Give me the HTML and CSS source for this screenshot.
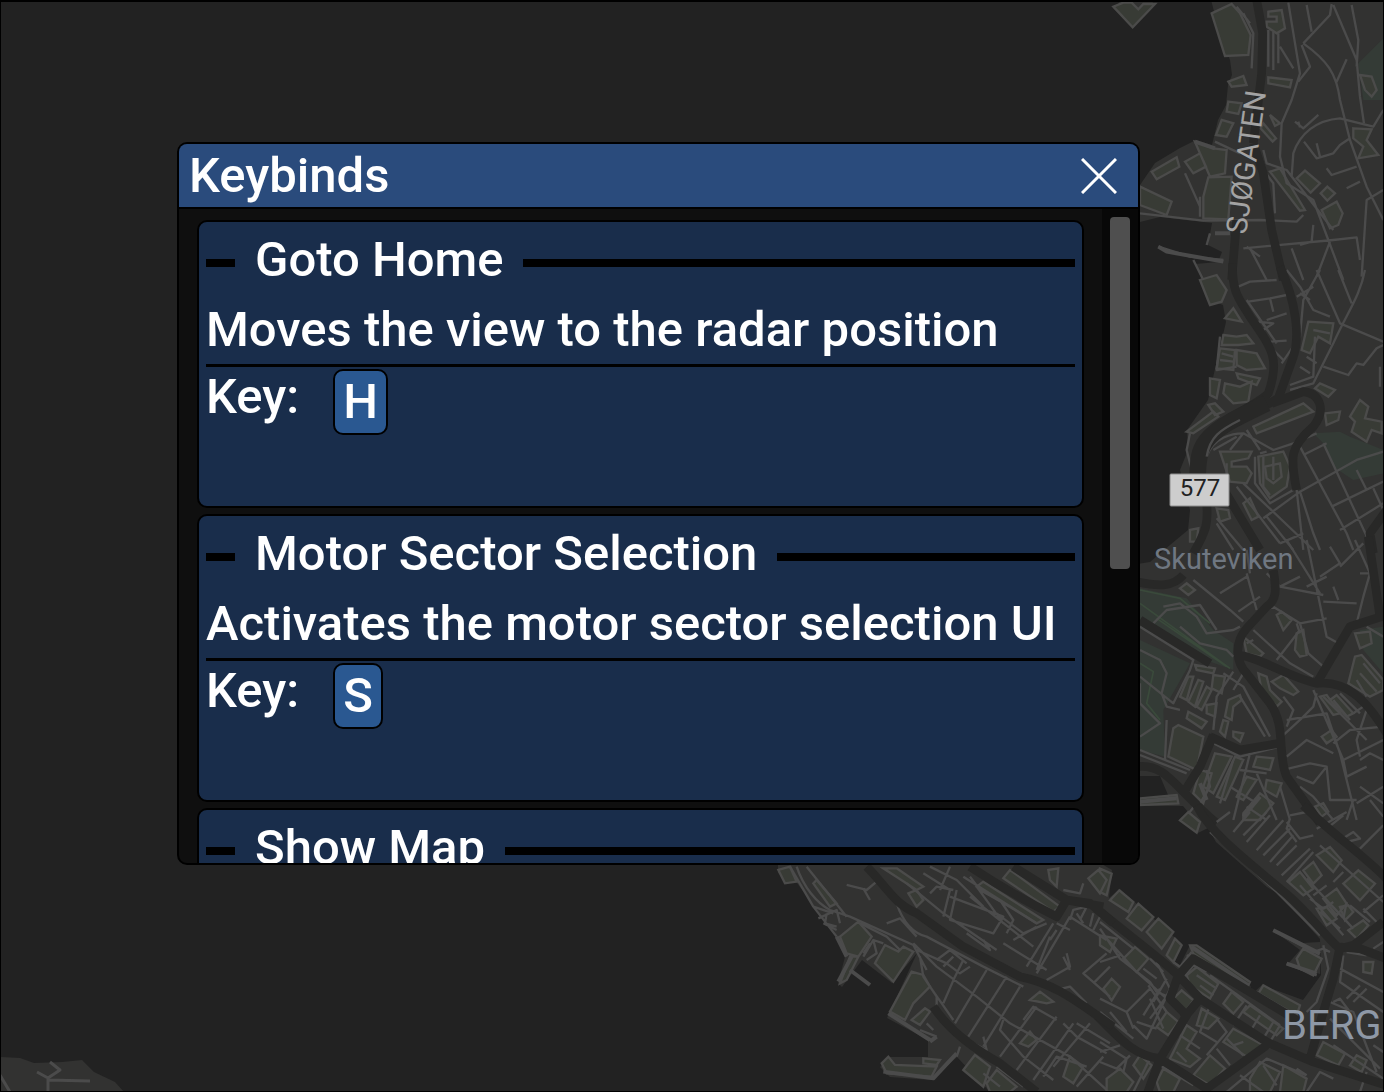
FILE: index.html
```html
<!DOCTYPE html>
<html lang="en">
<head>
<meta charset="utf-8">
<title>Keybinds</title>
<link rel="stylesheet" href="styles.css">
</head>
<body>
<main class="viewport">
<svg class="map" viewBox="0 0 1384 1092" preserveAspectRatio="xMidYMid slice" role="img" aria-label="Map">
  <!-- land -->
  <path class="land" d="M1384 0H1211L1215 15 1222 40 1230 60 1232 75 1228 85 1226 105 1218 120 1212 145 1196 140 1180 148 1155 163 1140 185 1100 195V222H1140L1160 217 1212 223 1208 245 1222 252 1218 262 1195 264 1200 275 1210 300 1223 305 1226 322 1217 360 1208 400 1187 430 1188 450 1180 470 1190 510 1188 530 1170 545 1150 562 1100 570V776H1160L1168 795 1130 806H1183L1188 812 1180 820 1198 833 1208 828 1216 842 1267 887 1280 895 1320 939 1321 975 1303 1000 1262 985 1253 993 1248 980 1190 945 1180 965 1175 962 1182 944 1120 889 1109 898 1112 870 1100 863V820H1060V867L1063 887 1080 890 1083 863H1045V820H760L778 863V873L797 883 837 937 845 957 838 983 842 987 862 960 892 983 917 953 887 1018 928 1040V1057L890 1057 880 1067 890 1077 932 1080 957 1057 990 1092H1384Z"/>
  <path class="land" d="M1113 8 1122 0H1155L1132 27ZM0 1057 20 1058 34 1063 62 1062 82 1060 94 1072 115 1082 124 1092H0ZM1274 931 1303 943 1320 942V974L1287 965 1300 950Z"/>
  <path class="street" d="M0 1075 10 1092M48 1092V1078L37 1072M48 1080 90 1081M48 1078 60 1070 50 1062"/>

  <!-- northern shore -->
  <g transform="translate(1100 0) scale(.3333)">
    <path class="park" d="M775 190 850 115V300H790ZM775 190"/>
    <path class="building" d="M40 20 98 82 165 12H130L115 28 95 8H70ZM335 40 395 12 420 40 452 105 445 165 375 168ZM385 245 430 228 440 255 395 260ZM505 232 575 240 570 262 505 250ZM385 305 425 310 415 342 380 335ZM365 360 400 370 380 410 348 405ZM155 515 230 472 238 500 170 538ZM120 560 215 605 200 645 120 615ZM255 485 300 460 318 500 280 520ZM285 425 340 445 380 450 375 520 330 530ZM325 532 395 530 385 658 310 655V590ZM590 535 615 512 660 550 632 578ZM662 580 682 560 705 580 682 602ZM665 630 710 605 728 640 715 675 690 685ZM760 385 815 388 800 420 835 465 775 475 790 440 760 415ZM505 35 545 30 555 85 530 100 500 80V65H530V50H505ZM510 345 540 370 525 378ZM490 370 528 415 518 425 482 385ZM510 515 540 505 615 630 600 632ZM780 225 815 230 830 270 815 290 795 270Z"/>
    <path class="street" d="M565 8 600 220 575 300 545 370 540 470 560 550 640 600 730 840M610 130 690 45 695 12M620 15 635 95M605 135 630 200 595 245M610 130C680 180 710 220 720 300L750 420 800 560 850 660M700 15 770 180 780 290 792 370M755 15 775 120 770 200M740 178 710 245M575 530 580 460C600 400 650 360 720 355L820 380 850 330M585 365 610 385 655 345M600 382 595 365M612 425 650 475 700 460 720 435 750 415M650 430 660 470M680 505 695 525 770 500M740 565 780 545M850 570 800 600 785 830M120 640 310 662 480 660 590 665 610 645M430 745 700 720 770 712 780 780M640 675 635 725 600 735M575 745 610 840M690 725 650 830M450 745 500 840M490 450 500 490 560 510 700 690M475 490 520 550 525 640M540 140 580 205M345 425 420 460M255 520 300 620M300 590 300 650M175 740 270 770 370 780M280 780 310 840M330 700 320 735M440 740 480 770M520 95V210M535 100V190M505 90V200M430 40 460 100 455 205M410 20 450 70"/>
    <path class="street thick" d="M175 740 200 755 370 785M285 425 345 445M345 700H390"/>
    <path class="road" d="M470 0 488 100 485 220 460 430M460 430 490 520 515 690 550 840M410 660 395 840"/>
  </g>

  <!-- Sandviken slope -->
  <g transform="translate(1100 270) scale(.3333)">
    <path class="park" d="M670 520 750 500 850 540V610L760 630 700 590ZM640 490 720 485 750 500 670 520Z"/>
    <path class="building" d="M300 30 350 15 380 60 365 95 330 105ZM375 145 400 115 425 155ZM370 195 410 200 440 195 460 220 415 225 365 225ZM360 235 405 240 400 300 350 295ZM410 240 470 250 495 295 440 300 410 285ZM330 325 360 330 350 385 330 375ZM375 340 420 350 455 335 445 395 400 400 370 370ZM410 310 480 325 470 345 415 325ZM260 485 340 425 355 440 280 490ZM325 405 345 400 370 425 345 435ZM625 155 700 160 690 220 655 200 630 250 605 240ZM645 355 660 340 705 360 685 380ZM675 430 720 425 715 450 680 465ZM780 390 805 410 795 445 845 455V490L815 480 800 515 755 485 765 455 750 440ZM360 545 455 545 445 565 395 575V590H440L455 610 440 640 390 635ZM475 560 550 545 570 590 560 650 510 685 480 640ZM495 590 540 580 545 620 520 640 500 625ZM430 700 450 685 475 740 455 750ZM460 470 610 400 640 425 600 440 470 490ZM350 715 385 720 390 745 360 755ZM270 780 295 775 290 815 270 815Z"/>
    <path class="street" d="M660 0 610 90 600 200 545 280M650 0 720 160 850 215M715 0 755 100M795 0C780 80 740 130 700 220L640 340 570 360M670 290 745 315 770 280 790 285 830 235 850 225M570 345 640 320 645 200M510 215 560 212M500 150 560 130M445 95 510 85 560 75M510 85 520 125M415 50 450 35 530 30M440 90 530 220M470 155 520 160 490 180M560 0 600 50 640 120 690 140M590 80 640 50M550 270 520 240M320 560C340 500 400 490 430 490L520 540 580 520 650 490M430 490 390 540M440 480 480 540M410 650 540 820M430 640 640 840M490 745 600 665 770 570 850 545M590 660 610 840M600 665 640 790 660 840M600 530 740 790 760 840M670 520 810 820M610 555 680 520M695 710 850 635M720 780 850 700M820 655 850 720M770 600 800 660M380 580V640M480 550 500 545M490 560V650L510 675M520 560V630M465 560V640L510 700 580 660M540 820 610 790M500 740 580 840M350 760 400 840M350 745 430 840M840 290V350M360 200 350 300 410 290M365 250 400 260M360 270 400 275M270 490 260 540 275 600M340 540 410 500M620 260 650 280M600 290 630 310M640 180 690 190M600 70 630 90"/>
    <path class="road" d="M398 -20C395 70 420 90 450 140 520 240 540 270 505 370 480 400 380 440 340 480 290 520 290 560 290 600M320 700C325 760 320 780 280 850M540 -10C590 100 600 200 580 260L535 385 420 450M515 400 610 365C660 370 680 420 640 470 570 530 570 560 590 660M360 640 480 840M860 720 810 790 820 850"/>
    <path class="road wide" d="M500 400C420 440 370 460 330 500 300 530 295 560 293 610"/>
    <path class="street" d="M320 560C330 500 360 480 420 450"/>
  </g>

  <!-- Skuteviken -->
  <g transform="translate(1100 540) scale(.3333)">
    <path class="park" d="M100 140 260 175 340 270 400 310 400 390 260 340 100 230ZM120 300 270 370 190 510 195 650 120 630ZM780 270 850 260V400L790 330Z"/>
    <path class="meadow" d="M120 150 240 175 330 250M120 190 390 385M170 235 380 380M120 370 160 395 140 490 180 540"/>
    <path class="building" d="M240 145 260 130 285 150 265 165ZM285 375 345 385 340 400 290 390ZM340 405 375 410 365 460 335 445ZM240 470 265 410 280 410 260 480ZM265 485 295 420 310 425 285 500ZM290 500 320 440 335 450 305 510ZM265 515 320 545 305 565 260 535ZM220 565 235 555 310 590 290 690 205 650ZM320 495 350 490 345 530 320 520ZM385 480 420 465 425 480 400 500 395 540 375 530ZM370 540 385 545 375 590 360 575ZM475 400 500 410 510 450 545 485 530 500 485 450ZM515 425 550 405 595 455 580 465 540 445ZM530 225 545 215 575 240 550 270ZM590 280 610 270 620 345 600 350 585 330ZM765 280 810 275 815 310 780 325ZM765 350 785 345 850 420V450L810 470 745 430ZM780 400 830 455M345 640 395 650 340 760 310 740ZM300 690 335 700 310 790 280 760ZM405 650 430 660 375 780 350 770ZM470 650 520 655 510 690 460 680ZM120 775 230 765 235 790 120 795ZM440 710 470 720 430 780 410 770ZM500 720 545 730 530 770 495 750ZM665 590 695 570 710 590 680 610ZM690 480 710 465 760 520 740 530ZM660 470 680 465 720 520 700 525ZM430 290 490 340 480 350 440 340ZM430 820 480 760 520 790 480 840H430ZM400 575 430 580 420 605 400 590ZM645 800 670 790 685 815 665 830Z"/>
    <path class="street" d="M280 120 390 210 430 245M360 160 440 110M440 100 470 210M415 215 480 170M450 100 440 30M500 100 540 140 670 165M560 0 660 160M620 0 680 290 715 310M660 110 720 70 690 20M540 140 600 110M670 185 770 190M765 0 810 100 790 170 770 250M700 140 715 180M720 80 790 10M780 100 810 100M620 140 680 110M450 240 480 220 520 200 600 250 680 235M460 270 570 370 640 410M590 250 600 280M600 250 625 340 670 380M530 360 600 270M440 310 460 300M190 200 240 190 290 230 320 280 400 270 420 260M240 260 300 310 380 330 400 350M160 250 200 210 300 195 350 270M120 260 280 360 270 390 220 490 120 410M120 330 180 360 200 400 185 460 200 500 240 510M120 430V490L180 550 120 590M120 630 270 690M120 645 260 700M200 540 195 660M400 395 350 470 340 570M370 400 430 440 510 590M420 470 495 590M430 400 400 450M560 540 680 520 720 640 770 840M545 590 600 540 640 500 650 460M640 450 730 660 850 600M670 470 800 600M560 650 620 600 700 640M550 690 630 670 680 680 640 730 590 710M680 680 690 780 770 780M730 660 740 710 800 680M800 510 770 600 780 650M850 560 750 570 700 610M850 660 810 640 780 660M760 520 790 500M550 470 580 510 560 560M780 740 850 790M850 740 770 790M600 740 640 770 700 840M340 610 420 650 540 620M400 660 360 790M450 640 400 840M420 690 500 700M470 700 530 840M390 740 470 790M250 840 290 790 350 840M320 690 330 740 300 790M440 800 500 840M540 740 570 840M760 780 740 840M810 780 850 830M700 480 750 540M720 460 780 520M770 420 800 470M790 370 840 430M800 260 850 290"/>
    <path class="street thick" d="M120 785 230 775M300 730 320 780M430 830 480 770"/>
    <path class="road" d="M520 90C530 150 530 180 500 200L440 265C400 310 410 370 440 400L510 490C560 560 530 640 560 710L660 850M410 345C480 350 560 410 650 430L750 260 860 225M650 430C740 420 800 480 860 580M110 125C180 140 220 140 250 105M330 590 420 630 540 610M340 585 300 680 250 760M110 680C200 670 220 740 350 850M805 -10 840 230M120 240 330 370"/>
  </g>

  <!-- Vågen harbour, east -->
  <g transform="translate(1100 812) scale(.3333)">
    <path class="building" d="M240 25 265 0 300 30 290 62ZM0 170 35 185 20 250 0 240ZM30 265 58 235 100 270 85 300ZM80 320 115 275 160 315 125 355ZM140 360 175 320 220 360 185 410ZM200 430 225 380 245 400 220 450ZM270 400 290 400 450 510 440 530 280 425ZM475 545 490 520 600 580 590 610ZM590 440 610 410 665 440 640 490 600 470ZM650 130 690 105 725 145 700 180ZM730 215 775 175 825 215 780 265ZM610 175 640 150 665 190 640 215ZM565 210 600 180 640 230 610 250ZM670 260 710 230 740 275 710 310ZM720 285 745 280 760 300 735 325ZM650 290 680 285 710 320 680 340ZM745 355 790 325 805 340 770 380ZM70 440 105 405 145 440 110 480ZM10 530 35 500 60 525 35 565ZM260 490 290 465 355 515 330 560 270 520 ZM370 575 395 540 430 570 400 605ZM220 560 245 535 280 565 255 600ZM170 645 200 600 235 630 205 670ZM210 740 260 640 290 660 260 710 300 740 270 765ZM290 640 305 590 355 620 325 650ZM280 790 330 730 375 770 330 820ZM370 690 400 650 490 700 450 740ZM430 600 450 580 550 650 530 670ZM650 730 670 690 735 725 715 760ZM750 760 770 730 800 745 785 780ZM20 800 60 770 100 810 80 840H20ZM100 760 120 730 155 760 130 800ZM170 810 190 770 240 800 220 840H180ZM450 800 480 750 540 780 510 840H450ZM550 760 620 800 610 840H540ZM790 450 820 450 815 485 790 480ZM0 370 50 380 30 420 0 400Z"/>
    <path class="street" d="M330 60 400 120 530 240 660 370M350 30 390 0M400 60 450 0M430 70 500 0M440 90 510 10M470 115 550 25M490 130 570 50M510 150 580 70M530 160 590 100M545 190 630 110M560 210 640 120M560 30 600 80 640 70M570 10 620 0M570 20 560 50 590 90M660 100 850 270M600 220 730 370M620 200 760 350M650 50 740 0M680 50 730 10M780 110 850 40M720 85 760 60 780 80 740 90M700 210 730 180M750 280 810 330M790 300 850 250M790 290 830 330M640 250 680 220M630 260 670 290 700 270M730 320 740 270M660 300 720 350M520 355 640 420 670 410 690 420M560 455 650 490M670 400 685 470 650 570 620 600M730 430 720 510 850 600M740 420 800 430M720 470 850 540M740 560 780 520M760 570 800 530M690 570 760 600 830 780M690 620 840 770M700 570 720 560 750 600M700 700 850 800M820 410 850 390M0 330 100 410M0 350 60 440 150 510 170 540M20 380 110 480 200 560M170 450 210 530 140 680 100 640M150 440 190 480M130 470 170 500M145 520 200 600M180 530 130 610M150 560 190 650M170 540 220 560M200 500 160 570M210 540 150 620M110 630 170 650M0 450 60 430M0 560 80 600 150 530M80 600 100 650M0 600 100 680M30 600 80 660M250 500 280 460 320 480M330 490 540 640M290 490 350 530M300 520 340 550M220 450 240 465 275 420M260 430 280 440 440 530M470 540 600 620M440 580 400 640M480 610 450 660M520 630 490 680M330 580 300 660 350 690M350 620 380 660 320 730M240 670 300 710M230 720 260 750M350 710 390 760M380 680 430 730M400 700 430 690M380 840 500 740 620 790M420 790 490 840M490 760 530 820M590 770 620 790M620 840 660 780 700 800M0 690 80 740 70 780M0 720 60 700M0 750 50 770 90 730M150 740 100 840M180 760 280 820M800 780 780 840M820 700 850 720M510 690 540 640"/>
    <path class="street thick" d="M520 355 600 395 660 425M560 455 650 485M275 405 445 520"/>
    <path class="road" d="M290 -20C330 60 420 130 540 230 620 290 680 380 720 410L760 400 850 330M610 -20C700 70 780 120 860 200M720 405 700 500 670 600 630 740M720 405 780 410 860 440M-10 290C60 350 170 430 235 490L280 440 400 510 600 630M235 490 300 560 500 690 640 750 860 820M235 490 210 560 260 610 180 740 140 850M300 560 250 620M-10 610C60 680 100 730 180 740L320 830 500 700"/>
  </g>

  <!-- Nordnes -->
  <g transform="translate(770 790) scale(.3333)">
    <path class="building" d="M210 440 265 395 305 440 265 500 230 490ZM210 580 240 500 265 500 230 570ZM315 520 345 465 385 485 400 470 430 485 370 575ZM360 665 425 545 460 555 480 590 430 640 405 690ZM425 690 465 655 480 665 450 705ZM335 820 355 800 375 825 500 830 485 860 350 850ZM460 805 510 810 500 825 460 820ZM580 840 615 795 660 830 640 890ZM650 880 680 840 740 890 720 906H660ZM700 265 720 240 870 350 850 365ZM620 290 640 275 820 390 800 400ZM955 265 985 240 1010 270 990 310ZM835 240 865 235 860 290 840 270ZM140 270 200 340 180 350 130 280ZM780 630 810 605 850 635 830 640ZM750 760 780 725 800 750 775 770ZM880 860 900 800 940 830 910 880ZM380 235 460 290 440 300 340 235ZM415 310 440 300 460 330 440 350ZM25 240 60 230 80 275 45 280Z"/>
    <path class="street" d="M60 230 130 350 200 440M80 230C100 290 140 340 180 360L240 380 430 465 470 540M110 230 190 330 230 380M130 350 190 370M145 385 200 360 210 400M170 370 165 400 200 410M230 285 290 300 320 275M280 295 300 330M350 400 390 385 440 440M380 340C400 400 430 430 470 440L640 530 760 590M430 460 500 530 620 620 720 700 900 800 1010 900M450 500 460 560 500 620 500 650M520 640 555 560 580 510M480 590 550 690M555 700 650 540M595 740 710 560M640 770 750 590M690 800 800 650M740 840 860 680M790 870 910 700M700 690 690 720 760 800 850 870M410 280 520 370 680 480M460 250 540 300 520 380M480 230 560 270 640 350M540 230 510 300M560 300 540 390 670 430 700 380 540 320M580 260 800 400M600 260 630 300 720 350M600 320 790 470M620 290 700 400M480 310 500 290 550 300M680 370 760 430 830 400M690 330 730 390 710 430M730 450 800 410M700 460 830 540M770 530 850 400M800 550 900 380M840 440 800 540M900 380 1010 450M860 400 900 420M890 490 900 530 830 570M880 500 900 540M1010 490 940 550 1020 620M970 580 1020 530M860 600 900 590 950 640M760 690 790 650 860 690M880 700 920 740 1010 790M920 700 1020 760M850 830 960 700M820 860 860 800 950 830M920 890 1000 800M590 430 660 480 640 450M440 480 530 520 570 550 600 530M500 510 540 480 590 520M520 530 550 500M900 390 910 360 950 350 930 390M960 410 970 370M970 420 990 380M860 420 840 450M940 400 920 370M280 500 310 450 340 460M310 450 320 490 290 510M300 460 280 490M470 700 490 720M450 720 500 740M570 770 560 800M610 760 650 780 640 740M640 850 690 890M680 830 760 890M160 400 200 420M270 400 350 440 390 480M880 300 930 310 940 280"/>
    <path class="street thick" d="M205 575 245 500M240 540 300 585M355 670 480 750M340 845 490 865 560 790M500 740 480 755M200 440 230 500"/>
    <path class="road" d="M290 230C350 290 370 340 440 370L580 470 750 560C860 580 940 650 1030 710M490 650C530 710 600 770 690 820L800 906M600 230C720 310 800 350 860 380L890 330 1000 350M730 230 890 330 960 340 1030 400"/>
  </g>

  <text class="label street-name" transform="translate(1246 235) rotate(-82)">SJØGATEN</text>
  <text class="label place" x="1154" y="569">Skuteviken</text>
  <text class="label city" x="1282" y="1039">BERG</text>
  <rect class="shield" x="1170" y="474" width="59" height="32" rx="1"/>
  <text class="label route" x="1200" y="496">577</text>
</svg>

<section class="window" aria-labelledby="window-title">
  <header class="titlebar">
    <h1 class="title" id="window-title">Keybinds</h1>
    <button class="close" type="button" aria-label="Close">
      <svg class="cross" viewBox="0 0 36 36"><path d="M1 1 35 35M35 1 1 35"/></svg>
    </button>
  </header>
  <div class="body">
    <div class="list">
      <article class="card">
        <h2 class="heading">Goto Home</h2>
        <p class="description">Moves the view to the radar position</p>
        <div class="binding"><label for="key-home">Key:</label><button class="key" id="key-home" type="button">H</button></div>
      </article>
      <article class="card">
        <h2 class="heading">Motor Sector Selection</h2>
        <p class="description">Activates the motor sector selection UI</p>
        <div class="binding"><label for="key-motor">Key:</label><button class="key" id="key-motor" type="button">S</button></div>
      </article>
      <article class="card">
        <h2 class="heading">Show Map</h2>
      </article>
    </div>
    <div class="scrollbar"><div class="thumb"></div></div>
  </div>
</section>
</main>
</body>
</html>
```
FILE: styles.css
```css
* {
  box-sizing: border-box;
}

body {
  margin: 0;
  background: #222;
  color: #fff;
  font: 500 49px/56px Roboto, sans-serif;
}

h1, h2, p {
  margin: 0;
  font: inherit;
}

button {
  padding: 0;
  color: inherit;
  font: inherit;
}

.viewport {
  position: relative;
  height: 100vh;
  overflow: hidden;
  border: 1px solid #000;
  border-top-width: 2px;
}

/* Map */

.map {
  position: absolute;
  top: -2px;
  left: -1px;
  width: 100vw;
  height: 100vh;
}

.land { fill: #323231; }
.park { fill: #343b36; }
.meadow { fill: none; stroke: #3a4a3b; stroke-width: 5; }

.building {
  fill: #383b35;
  stroke: #4b4b4a;
  stroke-width: 7;
}

.street {
  fill: none;
  stroke: #4b4b4b;
  stroke-width: 7;
  stroke-linejoin: round;
}

.map > .street { stroke-width: 3; }
.street.thick { stroke-width: 12; }

.road {
  fill: none;
  stroke: #282827;
  stroke-width: 26;
  stroke-linejoin: round;
}

.road.wide { stroke-width: 50; }

.label { font-weight: 400; }
.street-name { fill: #a3a3a3; font-size: 29px; }
.place { fill: #6f7781; font-size: 29px; }
.city { fill: #8e98a6; font-size: 40px; }
.shield { fill: #cdcdcd; stroke: #8d8d8d; }
.route { fill: #222; font-size: 24px; text-anchor: middle; }

/* Window */

.window {
  position: absolute;
  top: 140px;
  left: 176px;
  display: flex;
  flex-direction: column;
  width: 963px;
  height: 723px;
  overflow: hidden;
  background: #0f0f0f;
  border: 2px solid #000;
  border-radius: 10px;
}

.titlebar {
  display: flex;
  flex: none;
  align-items: center;
  justify-content: space-between;
  height: 65px;
  padding: 0 21px 0 10px;
  background: #2a4b7c;
  border-bottom: 2px solid #000;
}

.close {
  display: flex;
  background: none;
  border: 0;
}

.cross {
  width: 36px;
  height: 36px;
  fill: none;
  stroke: #fff;
  stroke-width: 3;
}

.body {
  display: flex;
  flex: 1;
  min-height: 0;
}

.list {
  display: flex;
  flex: 1;
  flex-direction: column;
  gap: 6px;
  padding: 11px 18px 0;
  overflow: hidden;
}

.card {
  flex: none;
  height: 288px;
  padding: 10px 7px;
  background: #192d4b;
  border: 2px solid #000;
  border-radius: 10px;
}

.heading {
  display: flex;
  align-items: center;
  gap: 20px;
}

.heading::before,
.heading::after {
  width: 29px;
  height: 8px;
  margin-top: 6px;
  background: #000;
  content: "";
}

.heading::after {
  flex: 1;
}

.description {
  padding: 14px 0 6px;
  border-bottom: 3px solid #000;
  white-space: nowrap;
}

.binding {
  display: flex;
  gap: 34px;
  padding-top: 2px;
}

.key {
  height: 66px;
  padding: 0 8px;
  background: #2a5891;
  border: 2px solid #000;
  border-radius: 10px;
}

.scrollbar {
  width: 36px;
  padding: 8px 8px 0;
  background: #080808;
}

.thumb {
  height: 352px;
  background: #4f4f4f;
  border-radius: 4px;
}
```
